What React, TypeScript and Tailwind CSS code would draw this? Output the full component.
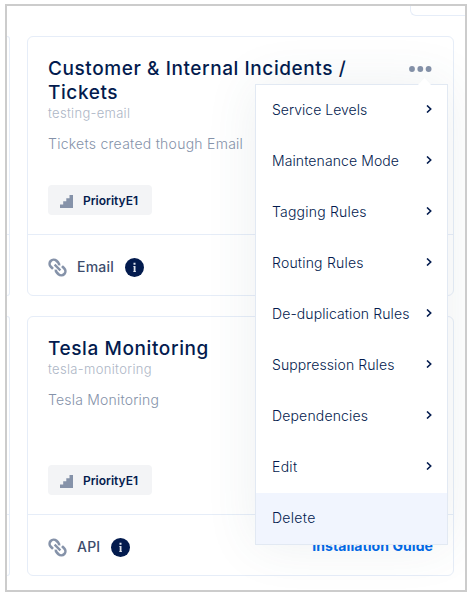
import React from "react";

type Service = {
  title: string;
  titleClass: string;
  slug: string;
  slugClass: string;
  description: string;
  descriptionClass: string;
  source: string;
  guide?: boolean;
};

const services: Service[] = [
  {
    title: "Customer & Internal Incidents / Tickets",
    titleClass: "tracking-[0.58px]",
    slug: "testing-email",
    slugClass: "tracking-[0.3px]",
    description: "Tickets created though Email",
    descriptionClass: "tracking-[0.26px]",
    source: "Email",
  },
  {
    title: "Tesla Monitoring",
    titleClass: "tracking-[0.6px]",
    slug: "tesla-monitoring",
    slugClass: "tracking-[0.33px]",
    description: "Tesla Monitoring",
    descriptionClass: "tracking-[0.2px]",
    source: "API",
    guide: true,
  },
];

const menuItems = [
  { label: "Service Levels", tracking: "tracking-[0.02px]" },
  { label: "Maintenance Mode", tracking: "tracking-[0.1px]" },
  { label: "Tagging Rules", tracking: "tracking-[0.2px]" },
  { label: "Routing Rules", tracking: "tracking-[0.2px]" },
  { label: "De-duplication Rules", tracking: "tracking-[0.1px]" },
  { label: "Suppression Rules", tracking: "tracking-[0.1px]" },
  { label: "Dependencies", tracking: "tracking-[0.17px]" },
  { label: "Edit", tracking: "tracking-[0.3px]" },
];

function StairsIcon() {
  return (
    <svg width="13" height="13" viewBox="0 0 13 13" fill="#8592a9">
      <path d="M0 13V9.5h3.2V6.3h3.1V3.2h3.2V0H13v13z" />
    </svg>
  );
}

function LinkIcon() {
  return (
    <svg width="19" height="19" viewBox="0 0 19 19" fill="none" stroke="#8592a9" strokeWidth="2.6">
      <path d="M5 10.9 2.9 8.8A3.9 3.9 0 0 1 8.5 2.8L10.2 4.5A3.9 3.9 0 0 1 11.2 7.4" />
      <path d="M14 8.1 16.1 10.2A3.9 3.9 0 0 1 10.5 16.2L8.8 14.5A3.9 3.9 0 0 1 7.8 11.6" />
      <path d="M6.6 6.6 12.4 12.4" strokeWidth="2.3" />
    </svg>
  );
}

function InfoIcon() {
  return (
    <svg width="19" height="19" viewBox="0 0 19 19">
      <circle cx="9.5" cy="9.5" r="9.5" fill="#031b4e" />
      <path d="M8.5 4.8h2v1.9h-2zM8.2 7.9h2.3v5.3h.5v.9H8.2v-.9h.5V8.8h-.5z" fill="#dfe4ec" />
    </svg>
  );
}

function ServiceCard({ service }: { service: Service }) {
  return (
    <section className="flex h-[260px] w-[427px] flex-col rounded-md border border-[#e6edf8]">
      <div className="flex h-[198px] flex-col items-start border-b border-[#e6edf8] px-5 pt-5 pb-[19px]">
        <h2
          className={`w-[320px] text-[19px] leading-6 font-[450] text-[#031b4e] ${service.titleClass}`}
        >
          {service.title}
        </h2>
        <p className={`text-[13px] leading-[17px] font-light text-[#adb6c6] ${service.slugClass}`}>
          {service.slug}
        </p>
        <p
          className={`mt-3 text-sm leading-5 font-[350] text-[#8592a9] ${service.descriptionClass}`}
        >
          {service.description}
        </p>
        <span className="mt-auto flex h-[30px] w-[104px] items-center gap-[10px] rounded bg-[#f3f4f6] pt-[2px] pl-3 text-xs font-semibold text-[#031b4e]">
          <StairsIcon />
          <span>PriorityE1</span>
        </span>
      </div>
      <div className="flex flex-1 items-center pt-1 pr-5 pl-5">
        <LinkIcon />
        <span className="ml-[10px] text-sm font-medium tracking-[0.2px] text-[#3d4c6c]">
          {service.source}
        </span>
        <span className="ml-[11px]">
          <InfoIcon />
        </span>
        {service.guide && (
          <a className="mb-[3px] ml-auto text-sm font-bold tracking-[0.08px] text-[#0069ea]">
            Installation Guide
          </a>
        )}
      </div>
    </section>
  );
}

function NeighbourCard() {
  return (
    <div className="h-[260px] w-[3px] rounded-r-md border border-l-0 border-[#e6edf8] pt-[197px]">
      <div className="h-px bg-[#e6edf8]" />
    </div>
  );
}

function ActionsMenu() {
  return (
    <div className="absolute top-[78px] left-[248px] h-[461px] w-[193px] border border-[#e2e9f3] bg-white shadow-[0_0_50px_rgba(60,90,100,0.09)]">
      <svg className="absolute -top-[7px] left-[161px]" width="15" height="8" viewBox="0 0 15 8">
        <path d="M0 8 7.5 0 15 8z" fill="#fff" />
      </svg>
      {menuItems.map((item) => (
        <div
          key={item.label}
          className="flex h-[51px] items-center justify-between pr-[15px] pb-[2px] pl-4 text-sm font-[350] text-[#031b4e]"
        >
          <span className={item.tracking}>{item.label}</span>
          <svg
            className="mb-px"
            width="6"
            height="8"
            viewBox="0 0 6 8"
            fill="none"
            stroke="#031b4e"
            strokeWidth="1.6"
          >
            <path d="M1 .5 4.7 4 1 7.5" />
          </svg>
        </div>
      ))}
      <div className="flex h-[51px] items-center bg-[#f1f5fe] pb-[2px] pl-4 text-sm font-[350] tracking-[0.3px] text-[#031b4e]">
        Delete
      </div>
    </div>
  );
}

export default function App() {
  return (
    <main className="h-[596px] w-[470px] bg-white pt-1 pl-[5px] font-['Inter','Liberation_Sans',sans-serif]">
      <div className="relative h-[588px] w-[462px] overflow-hidden border-2 border-[#cccccc]">
        <div className="ml-auto h-[10px] w-[55px] rounded-bl-md border-b border-l border-[#e6edf8]" />
        <div className="mt-5 flex">
          <div className="flex flex-col gap-5">
            <NeighbourCard />
            <NeighbourCard />
          </div>
          <div className="ml-[17px] flex flex-col gap-5">
            {services.map((service) => (
              <ServiceCard key={service.slug} service={service} />
            ))}
          </div>
        </div>
        <svg
          className="absolute top-[60px] left-[402px]"
          width="24"
          height="6"
          viewBox="0 0 24 6"
          fill="#8592a9"
        >
          <circle cx="3" cy="3" r="2.9" />
          <circle cx="11.3" cy="3" r="2.9" />
          <circle cx="19.6" cy="3" r="2.9" />
        </svg>
        <ActionsMenu />
      </div>
    </main>
  );
}
